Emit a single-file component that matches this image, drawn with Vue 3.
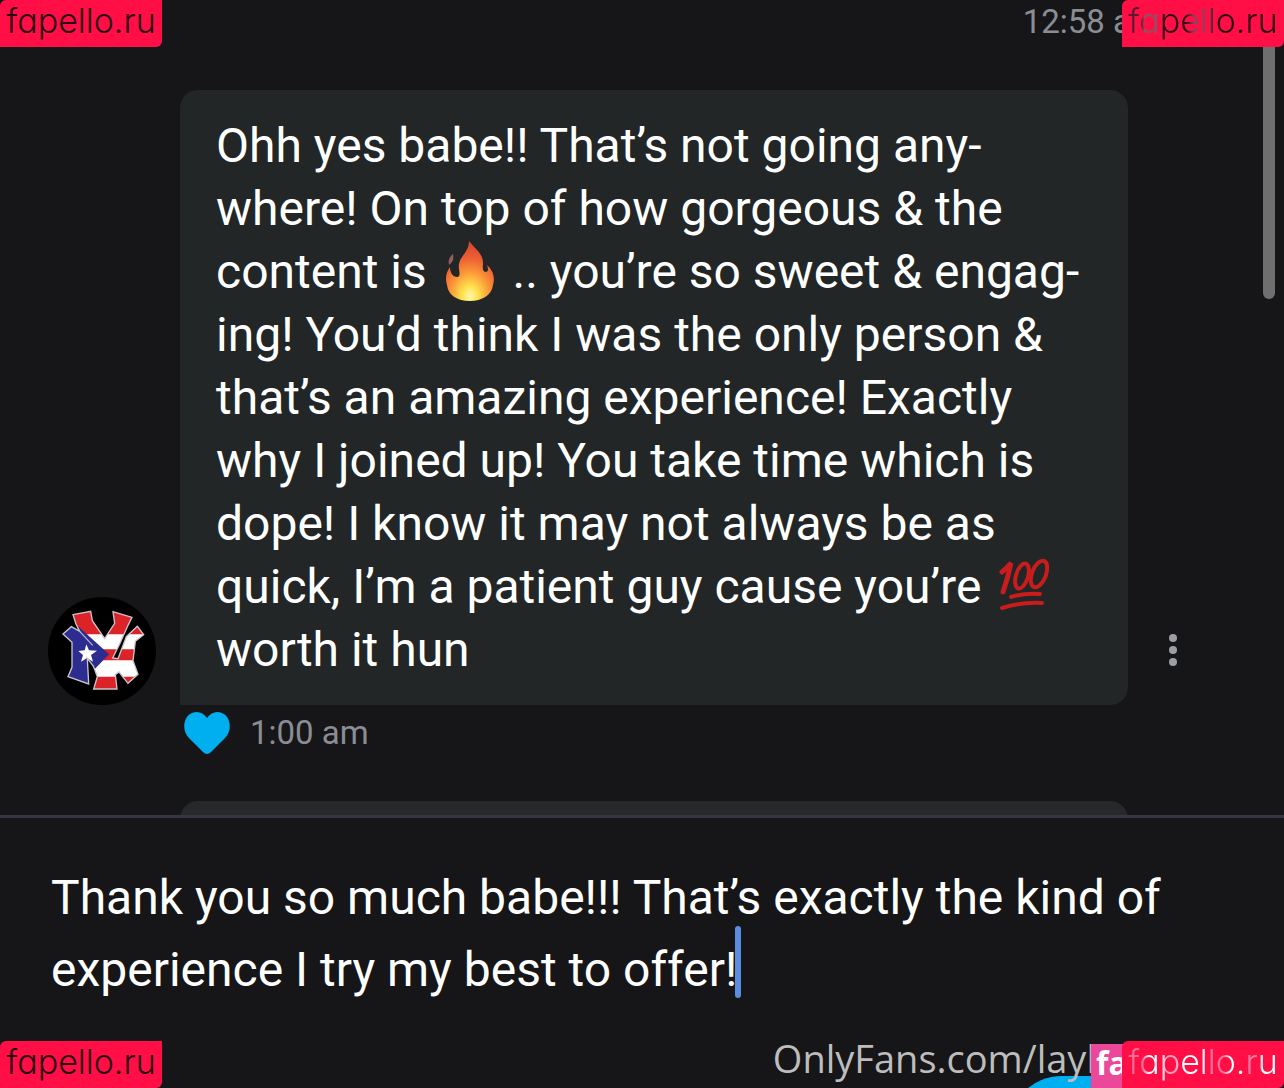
<template>
  <div class="chat">
    <main class="history">
      <div class="sent-meta">
        <span class="time">12:58 am</span>
        <svg class="ticks" viewBox="0 0 38 24" aria-hidden="true">
          <path d="M3 12l8 8L26 5M17 19l3 2L36 5" />
        </svg>
      </div>

      <div class="message-row">
        <svg class="avatar" viewBox="24 21 324 324" role="img" aria-label="Avatar">
          <defs>
            <clipPath id="letters">
              <path :d="logoPath" />
            </clipPath>
          </defs>
          <circle cx="186" cy="183" r="162" fill="#000" />
          <g clip-path="url(#letters)">
            <rect x="60" y="55" width="260" height="250" fill="#fff" />
            <path d="M90 55H320V133H90zM150 178H320V211H150zM150 260H320V300H150z" fill="#dc2328" />
            <path d="M60 100L116 110L207 193L158 244V290H60z" fill="#2d2d91" />
            <path d="M139 163l8 18 24 1-18 13 6 20-18-11-18 11 6-20-14-12 19-2z" fill="#fff" />
          </g>
          <path :d="logoPath" fill="none" stroke="#c9c3cb" stroke-width="4" />
          <path d="M119 124L158 166" fill="none" stroke="#b9aebc" stroke-width="4" />
        </svg>

        <p class="bubble">
          Ohh yes babe!! That’s not going any-<br />
          where! On top of how gorgeous &amp; the<br />
          content is
          <svg class="emoji" viewBox="0 0 50 60" role="img" aria-label="Fire">
            <defs>
              <radialGradient id="flame" cx="0.5" cy="0.92" r="0.85">
                <stop offset="0" stop-color="#fff7b0" />
                <stop offset="0.2" stop-color="#ffe04a" />
                <stop offset="0.48" stop-color="#fb9838" />
                <stop offset="0.75" stop-color="#ed5f34" />
                <stop offset="1" stop-color="#d94a30" />
              </radialGradient>
            </defs>
            <path
              d="M24 0C30 8 39 13 38 24C37 29 39 31 41 31C44 30 43 27 42 24C49 30 50 38 48 44C47 54 37 60 25 60C12 60 3 54 2 44C0 38 1 31 5 26C5 32 8 36 12 36C17 35 13 29 14 23C15 15 24 11 24 0Z"
              fill="url(#flame)"
            />
            <path d="M8 13C9 18 8 21 4 24C3 20 4 16 8 13Z" fill="#965d5c" />
          </svg>
          .. you’re so sweet &amp; engag-<br />
          ing! You’d think I was the only person &amp;<br />
          that’s an amazing experience! Exactly<br />
          why I joined up! You take time which is<br />
          dope! I know it may not always be as<br />
          quick, I’m a patient guy cause you’re
          <svg class="emoji hundred" viewBox="0 0 52 60" role="img" aria-label="100">
            <path d="M3 16Q8 12 12 7Q9 22 4 36" stroke-width="5" />
            <ellipse cx="23" cy="20" rx="6" ry="13" transform="rotate(17 23 20)" stroke-width="4" />
            <ellipse cx="40" cy="18" rx="7" ry="14" transform="rotate(21 40 18)" stroke-width="4" />
            <path d="M12 41Q25 37 41 38M3 52Q22 46 43 47" stroke-width="4" />
          </svg><br />
          worth it hun
        </p>

        <button class="more" type="button" aria-label="Message options">
          <svg viewBox="0 0 10 34" aria-hidden="true">
            <circle v-for="y in [5, 17, 29]" :key="y" cx="5" :cy="y" r="4" />
          </svg>
        </button>
      </div>

      <div class="received-meta">
        <button class="like" type="button" aria-label="Unlike">
          <svg viewBox="0 0 46 44" aria-hidden="true">
            <path d="M23 43Q21 43 19 41L5 27C-2 20-1 8 6 3C12-1 19 1 23 7C27 1 34-1 40 3C47 8 48 20 41 27L27 41Q25 43 23 43Z" />
          </svg>
        </button>
        <span class="time">1:00 am</span>
      </div>

      <div class="bubble next-bubble"></div>
      <div class="scrollbar"></div>
    </main>

    <form class="composer" @submit.prevent>
      <div class="field">
        <textarea v-model="draft" rows="2" aria-label="Message" spellcheck="false"></textarea>
        <span class="caret"></span>
      </div>
      <div class="actions">
        <button class="send" type="submit" aria-label="Send"></button>
      </div>
    </form>

    <span class="watermark">OnlyFans.com/layl</span>
    <span class="pink-tag">fa</span>
    <span v-for="corner in corners" :key="corner" :class="['tag', corner]">
      <span class="tag-text">fapello.ru</span>
    </span>
  </div>
</template>

<script setup>
import { ref } from 'vue';

const draft = ref('Thank you so much babe!!! That’s exactly the kind of\nexperience I try my best to offer!');

const corners = ['top-left', 'top-right', 'bottom-left', 'bottom-right'];

const logoPath =
  'M99 74L152 64L157 92L194 146L224 100L219 65L276 82L262 110L239 162L218 204L234 206L259 140L292 109L311 134L286 154L279 212L294 253L264 280L237 246L226 254L231 297L161 297L172 260L160 228L142 205L146 282L84 260L96 232L96 157L69 132L94 110L119 124L108 102Z';
</script>

<style>
body {
  margin: 0;
  background: #161618;
}
</style>

<style scoped>
.chat {
  position: relative;
  display: flex;
  flex-direction: column;
  height: 100vh;
  overflow: hidden;
  background: #161618;
  color: #fff;
  font-family: Roboto, "Liberation Sans", sans-serif;
}

button {
  border: 0;
  padding: 0;
  background: none;
  cursor: pointer;
}

.history {
  position: relative;
  flex: 1;
  min-height: 0;
  overflow: hidden;
}

.time {
  color: #8a8e94;
  font-size: 33px;
  line-height: 44px;
}

.sent-meta {
  display: flex;
  justify-content: flex-end;
  align-items: center;
  gap: 18px;
  height: 44px;
  margin-bottom: 46px;
  padding-right: 68px;
}

.ticks {
  width: 38px;
  height: 24px;
  fill: none;
  stroke: #8a8e94;
  stroke-width: 3;
}

.message-row {
  display: flex;
  align-items: flex-end;
  padding: 0 66px 0 48px;
}

.avatar {
  flex: none;
  width: 108px;
  height: 108px;
  margin-right: 24px;
}

.bubble {
  flex: 1;
  margin: 0;
  padding: 24px 36px;
  border-radius: 18px 18px 18px 0;
  background: #222627;
  font-size: 48px;
  line-height: 63px;
  white-space: nowrap;
}

/* Negative margins keep the emoji from stretching its line */
.emoji {
  width: 50px;
  height: 60px;
  margin: -12px 6px -4px;
  vertical-align: middle;
}

.hundred {
  width: 52px;
  fill: none;
  stroke: #c91c1c;
  stroke-linecap: round;
}

.more {
  flex: none;
  width: 90px;
  height: 108px;
}

.more svg {
  width: 10px;
  height: 34px;
  fill: #9b9fa3;
}

.received-meta {
  display: flex;
  align-items: center;
  gap: 20px;
  padding: 6px 184px;
}

.like,
.like svg {
  display: block;
  width: 46px;
  height: 44px;
  fill: #00aff0;
}

.next-bubble {
  height: 120px;
  margin: 40px 156px 0 180px;
  background: #26282a;
}

.scrollbar {
  position: absolute;
  top: 0;
  right: 9px;
  width: 12px;
  height: 299px;
  border-radius: 6px;
  background: #6f6f70;
}

.composer {
  border-top: 3px solid #353840;
  padding-top: 44px;
}

.field {
  position: relative;
  padding: 0 51px;
}

textarea {
  display: block;
  box-sizing: border-box;
  width: 100%;
  height: 144px;
  padding: 0;
  border: 0;
  outline: 0;
  overflow: hidden;
  resize: none;
  background: transparent;
  color: #fff;
  font: inherit;
  font-size: 48px;
  line-height: 72px;
}

.caret {
  position: absolute;
  left: 735px;
  top: 64px;
  width: 6px;
  height: 72px;
  border-radius: 3px;
  background: #5b8ee0;
}

.actions {
  display: flex;
  justify-content: flex-end;
  box-sizing: border-box;
  height: 82px;
  padding: 70px 36px 0 0;
  overflow: hidden;
}

.send {
  flex: none;
  width: 240px;
  height: 108px;
  border-radius: 54px;
  background: #00aff0;
}

.watermark {
  position: absolute;
  right: 188px;
  bottom: 4px;
  color: #bdbdbd;
  font-family: "Open Sans", "Noto Sans", sans-serif;
  font-size: 38px;
  line-height: 52px;
}

.pink-tag {
  position: absolute;
  right: 161px;
  bottom: 0;
  width: 32px;
  height: 44px;
  box-sizing: border-box;
  padding-left: 5px;
  background: #ec4899;
  font-family: "Open Sans", sans-serif;
  font-size: 32px;
  font-weight: 700;
  line-height: 38px;
}

.tag {
  position: absolute;
  display: flex;
  justify-content: center;
  width: 162px;
  height: 47px;
  border-radius: 6px 0 6px 0;
  background: #ff0f46;
  color: #2c0713;
  font-family: Inter, Lato, sans-serif;
  font-feature-settings: "cv11";
  font-size: 34px;
  font-weight: 300;
  line-height: 42px;
}

.top-left {
  top: 0;
  left: 0;
}

.top-right {
  top: 0;
  right: 0;
}

.bottom-left {
  bottom: 0;
  left: 0;
}

.bottom-right {
  right: 0;
  bottom: 0;
}

.top-right .tag-text {
  background: linear-gradient(90deg, #5a1c2c 0 9%, #8c5262 11% 20%, #2c0713 24% 38%, #8a4258 44% 54%, #2c0713 58%);
  background-clip: text;
  color: transparent;
}

.bottom-right .tag-text {
  background: linear-gradient(90deg, #ff6f95 0 10%, #fff 14% 22%, #ff9db8 26% 32%, #fff 36% 50%, #ff7197 54% 64%, #fff 68% 76%, #ff7da0 80% 86%, #fff 90%);
  background-clip: text;
  color: transparent;
}
</style>
